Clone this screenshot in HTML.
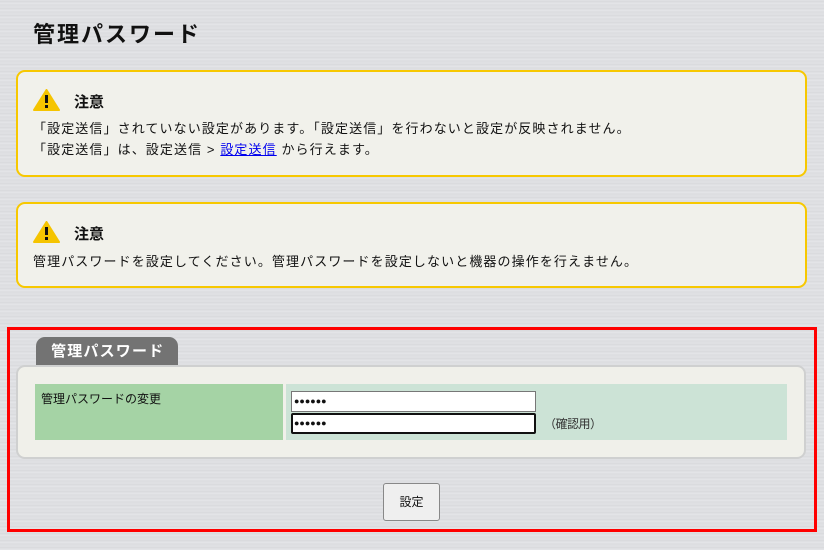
<!DOCTYPE html>
<html><head><meta charset="utf-8"><style>
*{margin:0;padding:0;box-sizing:border-box}
body{width:824px;height:550px;overflow:hidden;position:relative;font-family:"Liberation Sans","Noto Sans CJK JP",sans-serif;color:#111;
background:repeating-linear-gradient(180deg,#e2e3e6 0px,#d8d9dc 2px,#e6e7ea 3px,#dcdde0 5px,#e0e1e4 7px);}
.abs{position:absolute}
h1{position:absolute;left:33px;top:20px;font-size:22px;font-weight:bold;line-height:30px;letter-spacing:2px}
.box{position:absolute;left:16px;width:791px;border:2px solid #f7c800;border-radius:9px;background:#f1f1eb}
.warn{position:absolute;left:15px;width:27px;height:22px}
.ttl{position:absolute;left:56px;font-size:15px;font-weight:bold}
.txt{position:absolute;left:15px;font-size:13px;line-height:21px;white-space:nowrap;letter-spacing:1.1px}
a{color:#0000ee}
</style></head><body>
<h1>管理パスワード</h1>
<div class="box" style="top:70px;height:107px">
 <svg class="warn" style="top:17px" viewBox="0 0 27 22"><path d="M13.5 1 L26 21 L1 21 Z" fill="#f5c400" stroke="#f5c400" stroke-linejoin="round" stroke-width="2"/><rect x="12" y="6" width="3" height="8" fill="#111"/><rect x="12" y="16" width="3" height="3" fill="#111"/></svg>
 <div class="ttl" style="top:19px">注意</div>
 <div class="txt" style="top:46px">「設定送信」されていない設定があります。「設定送信」を行わないと設定が反映されません。<br>「設定送信」は、設定送信 &gt; <a href="#">設定送信</a> から行えます。</div>
</div>
<div class="box" style="top:202px;height:86px">
 <svg class="warn" style="top:17px" viewBox="0 0 27 22"><path d="M13.5 1 L26 21 L1 21 Z" fill="#f5c400" stroke="#f5c400" stroke-linejoin="round" stroke-width="2"/><rect x="12" y="6" width="3" height="8" fill="#111"/><rect x="12" y="16" width="3" height="3" fill="#111"/></svg>
 <div class="ttl" style="top:19px">注意</div>
 <div class="txt" style="top:47px">管理パスワードを設定してください。管理パスワードを設定しないと機器の操作を行えません。</div>
</div>
<div class="abs" style="left:7px;top:327px;width:810px;height:205px;border:3px solid #f00"></div>
<div class="abs" style="left:36px;top:337px;width:142px;height:29px;background:#737373;border-radius:9px 9px 0 0;color:#fff;font-weight:bold;font-size:15px;line-height:29px;padding-left:15px;letter-spacing:1.2px">管理パスワード</div>
<div class="abs" style="left:16px;top:365px;width:790px;height:94px;background:#f0f0ea;border:2px solid #cfd0d0;border-radius:9px"></div>
<div class="abs" style="left:35px;top:384px;width:248px;height:56px;background:#a5d3a5;font-size:12px;padding:6px 0 0 6px">管理パスワードの変更</div>
<div class="abs" style="left:286px;top:384px;width:501px;height:56px;background:#cce3d6"></div>
<div class="abs" style="left:291px;top:391px;width:245px;height:21px;background:#fff;border:1px solid #777;font-size:9px;line-height:19px;padding-left:2px">●●●●●●</div>
<div class="abs" style="left:291px;top:413px;width:245px;height:21px;background:#fff;border:2px solid #111;border-radius:2px;font-size:9px;line-height:17px;padding-left:1px">●●●●●●</div>
<div class="abs" style="left:544px;top:415px;font-size:12px;color:#333;letter-spacing:-0.5px">（確認用）</div>
<div class="abs" style="left:383px;top:483px;width:57px;height:38px;background:#efefef;border:1px solid #888;border-radius:3px;font-size:12px;text-align:center;line-height:36px">設定</div>
</body></html>
